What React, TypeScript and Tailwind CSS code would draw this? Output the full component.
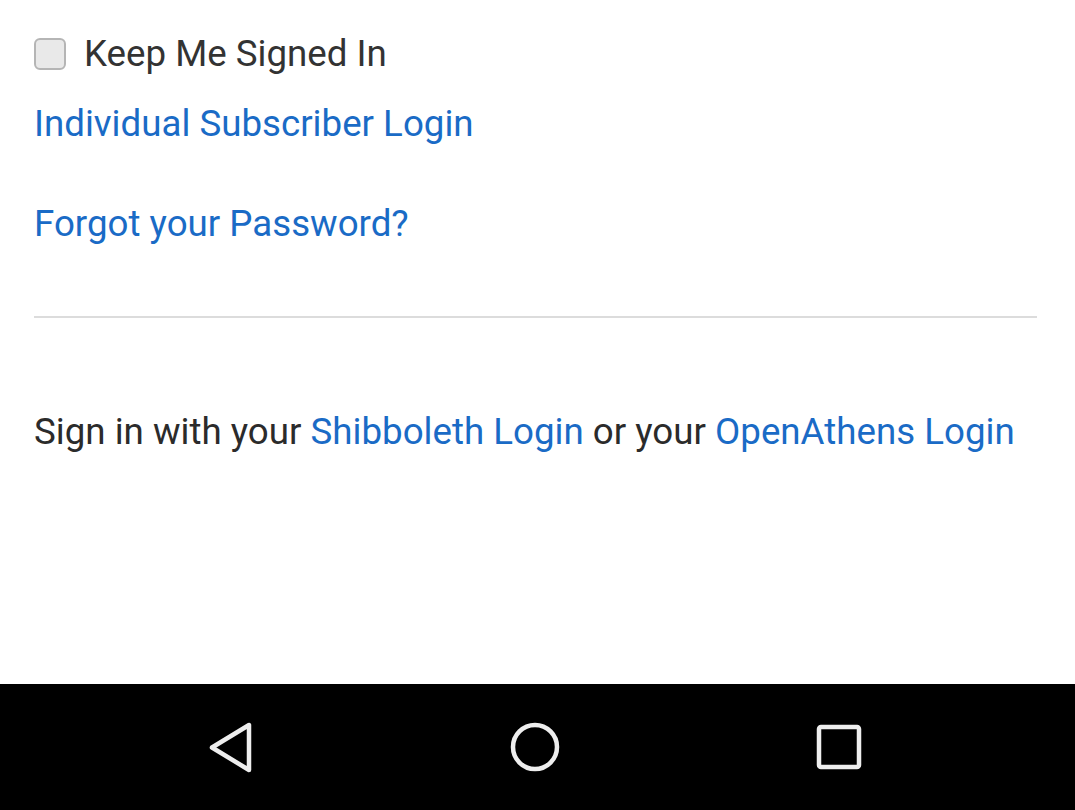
import React from 'react';

export default function App() {
  return (
    <div className="w-[1075px] h-[810px] flex flex-col bg-white overflow-hidden" style={{ fontFamily: 'Roboto, "Noto Sans", sans-serif' }}>
      <div className="flex-1 px-[34px] pt-[34px]">
        {/* Keep signed in */}
        <label className="flex items-center gap-[18px] text-[36.7px] text-[#333] leading-[40px]">
          <span className="w-[32px] h-[32px] rounded-[6px] border-2 border-[#b5b5b5] bg-[#e9e9e9]" />
          Keep Me Signed In
        </label>

        <div className="mt-[30px] text-[36.7px] leading-[40px] text-[#1a6bc6]">Individual Subscriber Login</div>
        <div className="mt-[60px] text-[36.7px] leading-[40px] text-[#1a6bc6]">Forgot your Password?</div>

        <div className="mt-[72px] h-[2px] w-[1003px] bg-[#dcdcdc]" />

        <div className="mt-[94px] text-[36.7px] leading-[40px] text-[#2b2b2b]">
          Sign in with your <span className="text-[#1a6bc6]">Shibboleth Login</span> or your{' '}
          <span className="text-[#1a6bc6]">OpenAthens Login</span>
        </div>
      </div>

      {/* Android nav bar */}
      <div className="h-[126px] bg-black flex items-center justify-center gap-[252px] pr-[6px]">
        <svg width="52" height="52" viewBox="0 0 52 52" fill="none">
          <path d="M44 4 L44 49 L7 26.5 Z" stroke="#eee" strokeWidth="4.5" strokeLinejoin="round" />
        </svg>
        <svg width="52" height="52" viewBox="0 0 52 52" fill="none">
          <circle cx="26" cy="26" r="22" stroke="#eee" strokeWidth="4.5" />
        </svg>
        <svg width="52" height="52" viewBox="0 0 52 52" fill="none">
          <rect x="6" y="6" width="40" height="40" rx="2" stroke="#eee" strokeWidth="4.5" />
        </svg>
      </div>
    </div>
  );
}
